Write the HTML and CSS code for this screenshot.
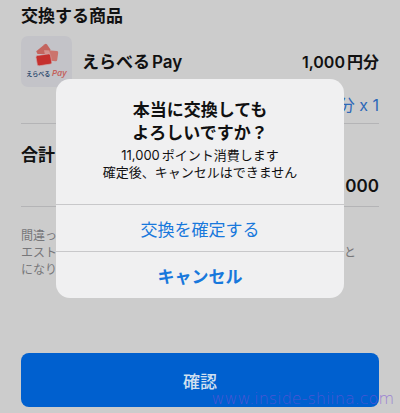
FILE: index.html
```html
<!DOCTYPE html>
<html lang="ja">
<head>
    <meta charset="UTF-8">
    <meta name="viewport" content="width=device-width, initial-scale=1.0">
    <title>えらべるPay 交換</title>
    <link rel="stylesheet" href="styles.css">
</head>
<body>
    <main class="page">
        <h1 class="heading">交換する商品</h1>
        <section class="item">
            <div class="item-row">
                <div class="logo">
                    <svg class="logo-cards" width="24" height="24" viewBox="0 0 24 24" aria-hidden="true">
                        <path d="M1.2 8.2 9.8 1.2Q11 .3 12 1.5L15.5 6.5 14 11 2.5 11Z" fill="#c4655f"/>
                        <path d="M9.5 7 22 8Q23.4 8.2 23.2 9.7L22.2 17Q21.9 18.4 20.4 18.2L10 17Z" fill="#cb746d"/>
                        <path d="M9 7.2 14 7.6 15.3 11 10 11.6Z" fill="#d3928e"/>
                        <path d="M2.4 12.5 13.6 10.9Q15.2 10.7 15.5 12.3L16.7 19.2Q16.9 20.8 15.3 21.1L4.3 22.8Q2.6 23 2.3 21.4L1 14.3Q.8 12.8 2.4 12.5Z" fill="#c5302e" stroke="#d0a5a8" stroke-width=".7"/>
                    </svg>
                    <span class="logo-text">えらべる <i>Pay</i></span>
                </div>
                <h2 class="item-name">えらべる<span class="latin">Pay</span></h2>
                <span class="item-price">1,000<span class="unit">円分</span></span>
            </div>
            <p class="quantity">分 x 1</p>
        </section>
        <section class="total">
            <h2 class="heading">合計</h2>
            <p class="total-points">000</p>
        </section>
        <div class="note">
            <p>間違っ</p>
            <p class="note-split"><span>エスト</span><span>と</span></p>
            <p>になり</p>
        </div>
        <button class="submit" type="button">確認</button>
    </main>

    <div class="overlay">
        <div class="dialog" role="alertdialog" aria-modal="true" aria-labelledby="dialogTitle" aria-describedby="dialogText">
            <div class="dialog-body">
                <h2 class="dialog-title" id="dialogTitle">本当に交換しても<br>よろしいですか？</h2>
                <p class="dialog-text" id="dialogText">11,000<span class="unit">ポイント消費します</span><br>確定後、キャンセルはできません</p>
            </div>
            <button class="dialog-btn" type="button">交換を確定する</button>
            <button class="dialog-btn cancel" type="button">キャンセル</button>
        </div>
    </div>
    <div class="watermark">www.inside-shiina.com</div>
</body>
</html>
```

FILE: styles.css
```css
* { box-sizing: border-box; }
body { margin: 0; background: #ccc; color: #111; font-family: Inter, "Noto Sans CJK JP", sans-serif; }
h1, h2, p { margin: 0; }
button { font-family: inherit; border: none; cursor: pointer; }

.page { padding: 6px 21px; }
.heading { font-size: 17px; line-height: 20px; font-weight: 600; }

.item { padding: 10px 0 8px; border-bottom: 1px solid #b4b4b6; }
.item-row { display: flex; align-items: center; }
.logo { display: flex; flex-direction: column; align-items: center; width: 51px; height: 51px; padding-top: 7px; background: #c3c3c8; border-radius: 7px; }
.logo-text { font-size: 6px; line-height: 12px; font-weight: 700; color: #2f4d70; white-space: nowrap; }
.logo-text i { font-family: "Open Sans", sans-serif; font-size: 9px; font-weight: 600; color: #c4605b; }
.item-name { margin-left: 10px; font-size: 17px; line-height: 20px; font-weight: 600; }
.latin, .unit { margin-left: 2px; }
.item-price { margin-left: auto; font-size: 16px; line-height: 20px; font-weight: 600; }
.quantity { margin-top: 8px; font-size: 16px; line-height: 20px; text-align: right; color: #2c68b8; }

.total { padding: 21px 0 10px; border-bottom: 1px solid #b4b4b6; }
.total-points { margin-top: 11px; font-size: 17px; line-height: 20px; font-weight: 600; text-align: right; }

.note { padding: 20px 0 75px; font-size: 12px; line-height: 17px; color: #77777a; }
.note-split { display: flex; justify-content: space-between; padding-right: 23px; }

.submit { display: block; width: 100%; height: 54px; background: #0060cf; color: #d2e0f0; border-radius: 8px; font-size: 17px; font-weight: 500; }

.overlay { position: absolute; top: 0; left: 0; right: 0; padding-top: 79px; }
.dialog { width: 72%; margin: 0 auto; background: #f0f0f1; border-radius: 14px; overflow: hidden; text-align: center; }
.dialog-body { padding: 20px 16px 23px; }
.dialog-title { font-size: 17px; line-height: 23px; font-weight: 600; }
.dialog-text { margin-top: 2px; font-size: 13px; line-height: 17px; }
.dialog-btn { display: block; width: 100%; height: 47px; padding: 0; background: none; border-top: 1px solid #c8c8ca; color: #1878dc; font-size: 17px; }
.dialog-btn.cancel { font-weight: 600; }

.watermark { position: absolute; right: 6px; bottom: 4px; font-family: "DejaVu Sans", sans-serif; font-size: 16px; line-height: 20px; font-weight: 200; color: #7a4fd8; opacity: 0.6; }
```
